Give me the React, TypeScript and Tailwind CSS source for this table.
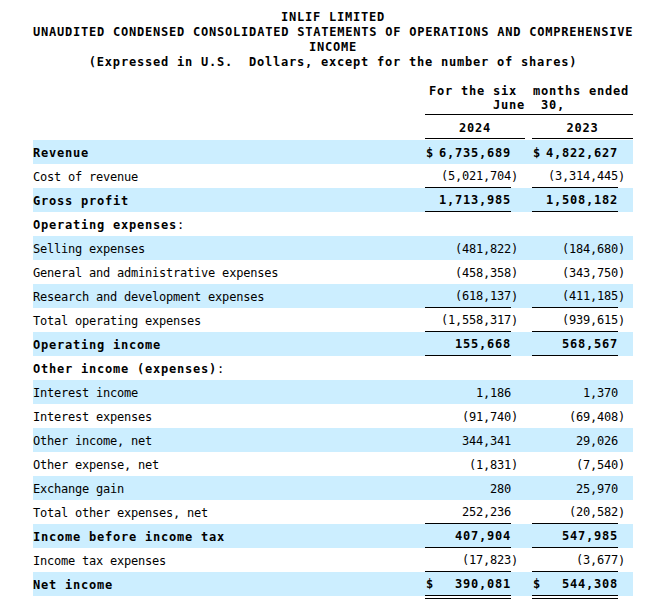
import React from 'react';
import clsx from 'clsx';

type Line = {
  label: string;
  colon?: boolean;
  bold?: boolean;
  shade?: boolean;
  a?: string;
  b?: string;
  dollar?: boolean;
  rule?: 'single' | 'double';
};

const rows: Line[] = [
  { label: 'Revenue', bold: true, shade: true, a: '6,735,689', b: '4,822,627', dollar: true },
  { label: 'Cost of revenue', a: '(5,021,704)', b: '(3,314,445)', rule: 'single' },
  { label: 'Gross profit', bold: true, shade: true, a: '1,713,985', b: '1,508,182', rule: 'single' },
  { label: 'Operating expenses', bold: true, colon: true },
  { label: 'Selling expenses', shade: true, a: '(481,822)', b: '(184,680)' },
  { label: 'General and administrative expenses', a: '(458,358)', b: '(343,750)' },
  { label: 'Research and development expenses', shade: true, a: '(618,137)', b: '(411,185)', rule: 'single' },
  { label: 'Total operating expenses', a: '(1,558,317)', b: '(939,615)', rule: 'single' },
  { label: 'Operating income', bold: true, shade: true, a: '155,668', b: '568,567', rule: 'single' },
  { label: 'Other income (expenses)', bold: true, colon: true },
  { label: 'Interest income', shade: true, a: '1,186', b: '1,370' },
  { label: 'Interest expenses', a: '(91,740)', b: '(69,408)' },
  { label: 'Other income, net', shade: true, a: '344,341', b: '29,026' },
  { label: 'Other expense, net', a: '(1,831)', b: '(7,540)' },
  { label: 'Exchange gain', shade: true, a: '280', b: '25,970' },
  { label: 'Total other expenses, net', a: '252,236', b: '(20,582)', rule: 'single' },
  { label: 'Income before income tax', bold: true, shade: true, a: '407,904', b: '547,985', rule: 'single' },
  { label: 'Income tax expenses', a: '(17,823)', b: '(3,677)', rule: 'single' },
  { label: 'Net income', bold: true, shade: true, a: '390,081', b: '544,308', dollar: true, rule: 'double' },
];

const bold = 'font-bold tracking-[0.78px]';
const plain = 'font-normal tracking-[-0.22px]';

const Amount = ({ value, row }: { value?: string; row: Line }) => {
  const neg = !!value && value.startsWith('(');
  const shown = neg ? value!.replace(')', '') : value;
  return (
    <>
      <div
        className={clsx(
          'flex items-center pt-px',
          row.dollar ? 'justify-between pl-px' : 'justify-end',
          row.rule && 'border-b border-black'
        )}
      >
        {row.dollar && <span>$</span>}
        <span>{shown}</span>
      </div>
      <div className="flex items-center pt-px">{neg ? ')' : ''}</div>
    </>
  );
};

const StatementRow = ({ row }: { row: Line }) => (
  <div
    className={clsx(
      'grid h-6 grid-cols-[392px_86px_14px_7px_86px_15px] whitespace-nowrap',
      row.shade && 'bg-[#cceeff]',
      row.bold ? bold : plain
    )}
  >
    <div className="flex items-center pt-px">
      {row.label}
      {row.colon && <span className={plain}>:</span>}
    </div>
    <Amount value={row.a} row={row} />
    <div />
    <Amount value={row.b} row={row} />
  </div>
);

const App = () => {
  return (
    <div className="min-h-[606px] bg-white pl-[33px] text-[12px] text-black font-['DejaVu_Sans_Mono','Liberation_Mono',monospace]">
      <div className="w-[600px]">
        <div className={clsx('pt-[10px] text-center leading-[15px] whitespace-pre', bold)}>
          <div>INLIF LIMITED</div>
          <div>UNAUDITED CONDENSED CONSOLIDATED STATEMENTS OF OPERATIONS AND COMPREHENSIVE</div>
          <div>INCOME</div>
          <div>(Expressed in U.S.  Dollars, except for the number of shares)</div>
        </div>

        <div className="mt-[14px] grid grid-cols-[392px_208px]">
          <div />
          <div className={clsx('border-b border-black pb-[2px] text-center leading-[14px] whitespace-pre', bold)}>
            <div>For the six  months ended</div>
            <div>June  30,</div>
          </div>
        </div>

        <div className={clsx('grid grid-cols-[392px_100px_7px_101px] leading-[14px]', bold)}>
          <div />
          <div className="border-b border-black pt-[6px] pb-[3px] text-center">2024</div>
          <div />
          <div className="border-b border-black pt-[6px] pb-[3px] text-center">2023</div>
        </div>

        <div className="mt-px">
          {rows.map((row) => (
            <StatementRow key={row.label} row={row} />
          ))}
          <div className="grid h-[3px] grid-cols-[392px_86px_14px_7px_86px_15px]">
            <div />
            <div className="border-b border-black" />
            <div />
            <div />
            <div className="border-b border-black" />
            <div />
          </div>
        </div>
      </div>
    </div>
  );
};

export default App;
